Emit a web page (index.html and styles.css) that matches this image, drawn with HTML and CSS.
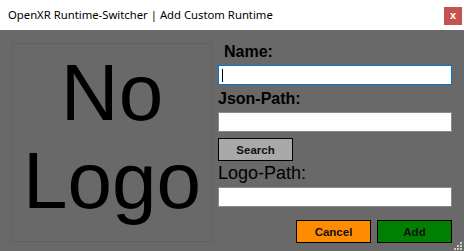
FILE: index.html
```html
<!DOCTYPE html>
<html lang="en">
<head>
  <meta charset="UTF-8">
  <title>OpenXR Runtime-Switcher | Add Custom Runtime</title>
  <link rel="stylesheet" href="styles.css">
</head>
<body>
  <!-- Title bar -->
  <header class="titlebar">
    <span class="title">OpenXR Runtime-Switcher | Add Custom Runtime</span>
    <span class="close">x</span>
  </header>

  <!-- Dialog body -->
  <main class="dialog">
    <div class="logo-box">
      <span>No<br>Logo</span>
    </div>

    <form class="fields">
      <label class="lbl lbl-name">Name:</label>
      <div class="input focused"><span class="caret"></span></div>

      <label class="lbl lbl-json">Json-Path:</label>
      <div class="input"></div>

      <button type="button" class="btn btn-search">Search</button>

      <label class="lbl lbl-logo">Logo-Path:</label>
      <div class="input"></div>

      <div class="actions">
        <button type="button" class="btn btn-cancel">Cancel</button>
        <button type="button" class="btn btn-add">Add</button>
      </div>
    </form>

    <!-- Resize grip -->
    <svg class="grip" width="10" height="10" viewBox="0 0 10 10">
      <rect x="7" y="1" width="2" height="2" fill="#cfcfcf"/>
      <rect x="4" y="4" width="2" height="2" fill="#cfcfcf"/>
      <rect x="7" y="4" width="2" height="2" fill="#cfcfcf"/>
      <rect x="1" y="7" width="2" height="2" fill="#cfcfcf"/>
      <rect x="4" y="7" width="2" height="2" fill="#cfcfcf"/>
      <rect x="7" y="7" width="2" height="2" fill="#cfcfcf"/>
    </svg>
  </main>
</body>
</html>
```

FILE: styles.css
```css
* {
  margin: 0;
  padding: 0;
  box-sizing: border-box;
}

body {
  width: 464px;
  height: 251px;
  overflow: hidden;
  font-family: "Liberation Sans", Arial, sans-serif;
  background: #696969;
}

/* Title bar */
.titlebar {
  height: 30px;
  background: #fff;
  display: flex;
  align-items: center;
  justify-content: space-between;
  padding: 0 2px 0 8px;
}

.title {
  font-family: "Noto Sans", "Liberation Sans", sans-serif;
  font-size: 11.3px;
  color: #000;
  margin-top: -1px;
}

.close {
  width: 18px;
  height: 18px;
  margin-top: 2px;
  background: #c75050;
  color: #fff;
  font-size: 11px;
  font-weight: bold;
  display: flex;
  align-items: center;
  justify-content: center;
  padding-bottom: 2px;
}

/* Body */
.dialog {
  position: relative;
  height: 221px;
  display: flex;
  padding: 13px 0 0 12px;
}

.logo-box {
  width: 200px;
  height: 199px;
  border: 1px solid #616161;
  display: flex;
  justify-content: center;
  padding-top: 5px;
  text-align: center;
  font-size: 80px;
  line-height: 88px;
  color: #000;
}

.fields {
  margin-left: 6px;
  width: 234px;
  display: flex;
  flex-direction: column;
}

.lbl {
  color: #000;
  font-weight: bold;
  font-size: 16px;
  line-height: 18px;
}

.lbl-name {
  margin-left: 6px;
}

.lbl-json {
  margin-top: 5px;
}

.lbl-logo {
  margin-top: 2px;
  font-weight: normal;
  font-size: 18px;
  line-height: 20px;
}

.input {
  margin-top: 4px;
  height: 20px;
  width: 234px;
  background: #fff;
  border: 1px solid #8a8a8a;
  position: relative;
}

.input.focused {
  border-color: #0078d7;
}

.caret {
  position: absolute;
  left: 3px;
  top: 3px;
  width: 1px;
  height: 13px;
  background: #000;
}

.btn {
  width: 75px;
  height: 23px;
  border: 1px solid #000;
  font-family: "Liberation Sans", Arial, sans-serif;
  font-size: 11.5px;
  font-weight: bold;
  color: #111;
}

.btn-search {
  margin-top: 6px;
  background: #a9a9a9;
}

.actions {
  margin-top: 13px;
  display: flex;
  justify-content: flex-end;
  gap: 6px;
}

.btn-cancel {
  background: #ff8c00;
}

.btn-add {
  background: #008000;
}

.grip {
  position: absolute;
  right: 1px;
  bottom: 0;
}
```
